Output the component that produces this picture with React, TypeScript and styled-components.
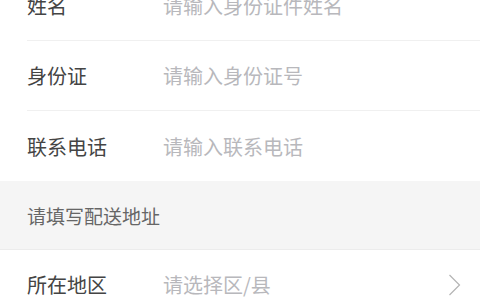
import styled, { createGlobalStyle } from 'styled-components';

const GlobalStyle = createGlobalStyle`
  html, body {
    margin: 0;
    padding: 0;
    background: #fff;
    font-family: "Noto Sans CJK SC", "Noto Sans", sans-serif;
    overflow: hidden;
  }
  * { box-sizing: border-box; }
`;

const Page = styled.div`
  width: 480px;
  margin-top: -29px;
`;

const Row = styled.label<{ last?: boolean }>`
  display: flex;
  align-items: center;
  height: 70px;
  margin-left: 27px;
  padding-right: 19px;
  border-bottom: ${({ last }) => (last ? 'none' : '1px solid #f0f0f0')};
`;

const Label = styled.span`
  width: 136px;
  flex-shrink: 0;
  font-size: 20px;
  color: #444;
`;

const Field = styled.input`
  flex: 1;
  min-width: 0;
  border: none;
  outline: none;
  padding: 0;
  background: transparent;
  font-family: inherit;
  font-size: 20px;
  color: #444;
  &::placeholder {
    color: #b8b8bc;
  }
`;

const Section = styled.div`
  display: flex;
  align-items: center;
  height: 69px;
  padding-left: 27px;
  background: #f5f5f5;
  border-bottom: 1px solid #ececec;
  font-size: 19px;
  color: #666;
`;

const Chevron = () => (
  <svg width="13" height="22" viewBox="0 0 13 22" fill="none">
    <path d="M1.5 1 L11.5 11 L1.5 21" stroke="#b4b4b4" strokeWidth="1.2" />
  </svg>
);

export default function App() {
  return (
    <>
      <GlobalStyle />
      <Page>
        <Row>
          <Label>姓名</Label>
          <Field placeholder="请输入身份证件姓名" />
        </Row>
        <Row>
          <Label>身份证</Label>
          <Field placeholder="请输入身份证号" />
        </Row>
        <Row last>
          <Label>联系电话</Label>
          <Field placeholder="请输入联系电话" />
        </Row>
        <Section>请填写配送地址</Section>
        <Row>
          <Label>所在地区</Label>
          <Field placeholder="请选择区/县" readOnly />
          <Chevron />
        </Row>
      </Page>
    </>
  );
}
